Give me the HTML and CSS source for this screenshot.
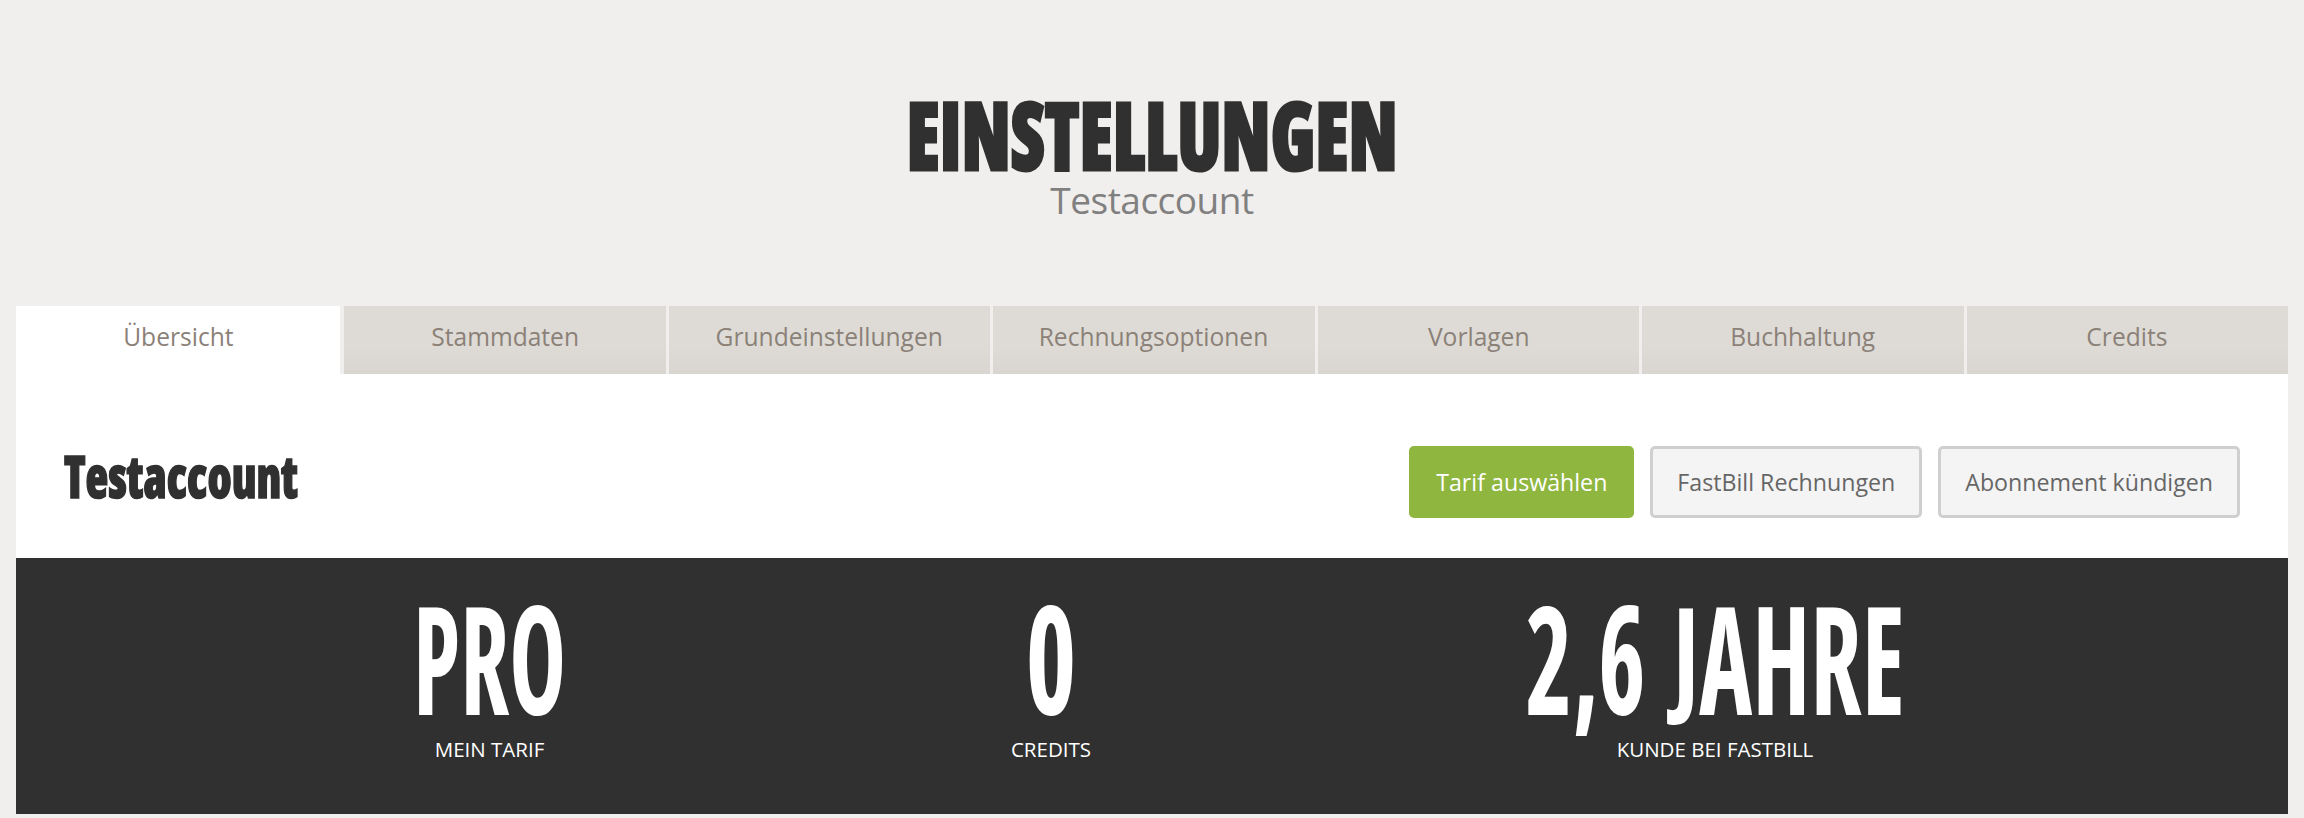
FILE: index.html
```html
<!DOCTYPE html>
<html lang="de">
<head>
    <meta charset="UTF-8">
    <title>Einstellungen</title>
    <link rel="stylesheet" href="styles.css">
</head>
<body>
    <header class="page-head">
        <h1 class="page-title"><span>EINSTELLUNGEN</span></h1>
        <p class="page-sub">Testaccount</p>
    </header>

    <main class="panel">
        <nav class="tabs">
            <a class="tab active"><span>Übersicht</span></a>
            <a class="tab"><span>Stammdaten</span></a>
            <a class="tab"><span>Grundeinstellungen</span></a>
            <a class="tab"><span>Rechnungsoptionen</span></a>
            <a class="tab"><span>Vorlagen</span></a>
            <a class="tab"><span>Buchhaltung</span></a>
            <a class="tab"><span>Credits</span></a>
        </nav>

        <div class="account-bar">
            <h2 class="account-name"><span>Testaccount</span></h2>
            <div class="actions">
                <a class="btn btn-green">Tarif auswählen</a>
                <a class="btn">FastBill Rechnungen</a>
                <a class="btn">Abonnement kündigen</a>
            </div>
        </div>

        <div class="stats">
            <div class="stat">
                <div class="stat-value"><span>PRO</span></div>
                <div class="stat-label">MEIN TARIF</div>
            </div>
            <div class="stat">
                <div class="stat-value"><span class="zero">0</span></div>
                <div class="stat-label">CREDITS</div>
            </div>
            <div class="stat">
                <div class="stat-value"><span class="years">2,6 <b class="letter-j">J</b>AHRE</span></div>
                <div class="stat-label">KUNDE BEI FASTBILL</div>
            </div>
        </div>
    </main>
</body>
</html>
```

FILE: styles.css
```css
body {
    margin: 0;
    background-color: #f0efed;
    font-family: "Open Sans", "Noto Sans", sans-serif;
    overflow: hidden;
}

.page-head {
    height: 306px;
    box-sizing: border-box;
    padding-top: 99px;
    text-align: center;
}

.page-title {
    margin: 0;
    font-stretch: 75%;
    font-size: 94px;
    line-height: 70px;
    font-weight: 800;
    color: #303030;
}

/* no heavy condensed face here, so squeeze the condensed one and thicken it */
.page-title span {
    display: inline-block;
    transform: scaleX(0.8);
    -webkit-text-stroke: 3px #303030;
}

.page-sub {
    margin: 9px 0 0;
    font-size: 37px;
    line-height: 44px;
    letter-spacing: -0.5px;
    color: #808080;
}

.panel {
    margin: 0 16px;
    background-color: #fff;
}

.tabs {
    display: flex;
    gap: 3px;
    background-color: #f0efed;
}

.tab {
    flex: 1;
    height: 68px;
    line-height: 60px;
    text-align: center;
    font-size: 26px;
    color: #8b8178;
    background: linear-gradient(#dedbd6, #dedbd6 60%, #d9d6d1);
}

.tab span {
    display: inline-block;
    transform: scaleX(0.945);
}

.tab.active {
    flex: none;
    width: 324px;
    margin-right: 1px;
    background: #fff;
}

.account-bar {
    display: flex;
    justify-content: space-between;
    align-items: center;
    height: 184px;
    padding: 0 48px;
}

.account-name {
    margin: 0;
    padding-top: 19px;
    font-stretch: 75%;
    font-size: 58px;
    line-height: 80px;
    font-weight: 800;
    color: #303030;
}

.account-name span {
    display: inline-block;
    transform: scaleX(0.81);
    transform-origin: left center;
    -webkit-text-stroke: 1.5px #303030;
}

.actions {
    display: flex;
    gap: 16px;
    padding-top: 32px;
}

.btn {
    box-sizing: border-box;
    height: 72px;
    line-height: 66px;
    padding: 0 24px;
    font-size: 23.2px;
    color: #666;
    background-color: #f4f4f4;
    border: 3px solid #cfcfcf;
    border-radius: 5px;
}

.btn-green {
    color: #fff;
    background-color: #8fb63f;
    border-color: #8fb63f;
}

.stats {
    display: grid;
    grid-template-columns: 941px 182px 1fr;
    height: 256px;
    padding-left: 3px;
    background-color: #303030;
    color: #fff;
    text-align: center;
}

.stat-value {
    padding-top: 41px;
    font-stretch: 75%;
    font-size: 150px;
    line-height: 116px;
    font-weight: 700;
    white-space: nowrap;
}

.stat-value span {
    display: inline-block;
    transform: scaleX(0.64);
}

.stat-value .zero {
    transform: scaleX(0.72);
}

.stat-value .years {
    transform: scaleX(0.67);
    word-spacing: 14px;
}

/* this J hangs below the baseline, pull the hook up so it clears the label */
.letter-j {
    display: inline-block;
    font-weight: inherit;
    transform: scaleY(0.84);
    transform-origin: 50% 9px;
}

.stat-label {
    margin-top: 20px;
    font-size: 20.5px;
    line-height: 28px;
}
```
